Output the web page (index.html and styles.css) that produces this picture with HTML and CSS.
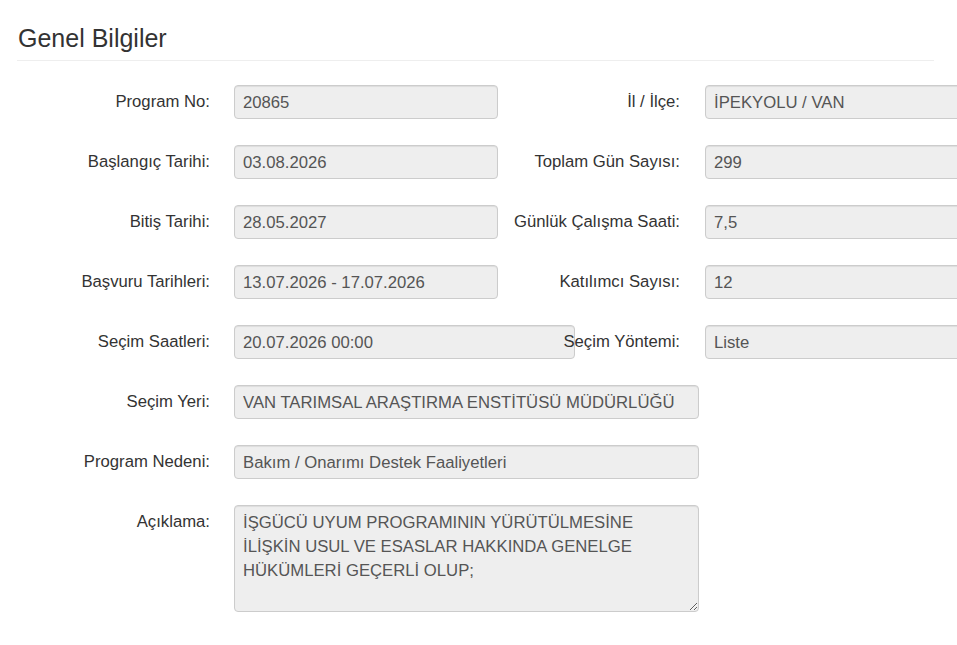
FILE: index.html
```html
<!DOCTYPE html>
<html lang="tr">
<head>
<meta charset="utf-8">
<title>Genel Bilgiler</title>
<link rel="stylesheet" href="styles.css">
</head>
<body>
<div class="page">
  <h3 class="page-header">Genel Bilgiler</h3>
  <div class="form">
    <label class="lbl">Program No:</label>
    <input class="ctl" type="text" readonly value="20865">
    <label class="lbl lbl-r">İl / İlçe:</label>
    <input class="ctl" type="text" readonly value="İPEKYOLU / VAN">

    <label class="lbl">Başlangıç Tarihi:</label>
    <input class="ctl" type="text" readonly value="03.08.2026">
    <label class="lbl lbl-r">Toplam Gün Sayısı:</label>
    <input class="ctl" type="text" readonly value="299">

    <label class="lbl">Bitiş Tarihi:</label>
    <input class="ctl" type="text" readonly value="28.05.2027">
    <label class="lbl lbl-r">Günlük Çalışma Saati:</label>
    <input class="ctl" type="text" readonly value="7,5">

    <label class="lbl">Başvuru Tarihleri:</label>
    <input class="ctl" type="text" readonly value="13.07.2026 - 17.07.2026">
    <label class="lbl lbl-r">Katılımcı Sayısı:</label>
    <input class="ctl" type="text" readonly value="12">

    <label class="lbl">Seçim Saatleri:</label>
    <input class="ctl ctl-md" type="text" readonly value="20.07.2026 00:00">
    <label class="lbl lbl-r">Seçim Yöntemi:</label>
    <input class="ctl" type="text" readonly value="Liste">

    <label class="lbl">Seçim Yeri:</label>
    <input class="ctl ctl-wide" type="text" readonly value="VAN TARIMSAL ARAŞTIRMA ENSTİTÜSÜ MÜDÜRLÜĞÜ">

    <label class="lbl">Program Nedeni:</label>
    <input class="ctl ctl-wide" type="text" readonly value="Bakım / Onarımı Destek Faaliyetleri">

    <label class="lbl lbl-top">Açıklama:</label>
    <textarea class="ctl ctl-wide ctl-area" readonly>İŞGÜCÜ UYUM PROGRAMININ YÜRÜTÜLMESİNE İLİŞKİN USUL VE ESASLAR HAKKINDA GENELGE HÜKÜMLERİ GEÇERLİ OLUP;</textarea>
  </div>
</div>
</body>
</html>
```

FILE: styles.css
```css
html, body {
  margin: 0;
  padding: 0;
  background: #fff;
  overflow: hidden;
}
body {
  font-family: "Liberation Sans", Arial, sans-serif;
  font-size: 16.7px;
  color: #333;
}
.page {
  padding: 0 23px 0 17px;
  width: 957px;
  box-sizing: border-box;
}
.page-header {
  margin: 0;
  padding: 25px 0 9px 1px;
  font-size: 25px;
  font-weight: normal;
  line-height: 26px;
  color: #333;
  border-bottom: 1px solid #eee;
}
.form {
  margin-top: 24px;
  display: grid;
  grid-template-columns: 217px 264px 207px 264px;
  grid-template-rows: repeat(7, 34px) 107px;
  row-gap: 26px;
}
.lbl {
  grid-column: 1;
  text-align: right;
  padding-right: 24px;
  line-height: 34px;
  white-space: nowrap;
  position: relative;
}
.lbl-r {
  grid-column: 3;
  padding-right: 25px;
}
.lbl-top {
  align-self: start;
}
.ctl {
  box-sizing: border-box;
  width: 264px;
  height: 34px;
  margin: 0;
  padding: 1px 8px 0;
  font-family: "Liberation Sans", Arial, sans-serif;
  font-size: 16.7px;
  color: #555;
  background: #eee;
  border: 1px solid #ccc;
  border-radius: 4px;
  box-shadow: inset 0 1px 1px rgba(0,0,0,0.075);
  outline: none;
}
.ctl-md {
  width: 341px;
}
.ctl-wide {
  width: 465px;
  grid-column: 2 / span 2;
}
.ctl-area {
  height: 107px;
  padding: 5px 8px;
  line-height: 24px;
  resize: vertical;
  display: block;
  overflow: hidden;
}
```
